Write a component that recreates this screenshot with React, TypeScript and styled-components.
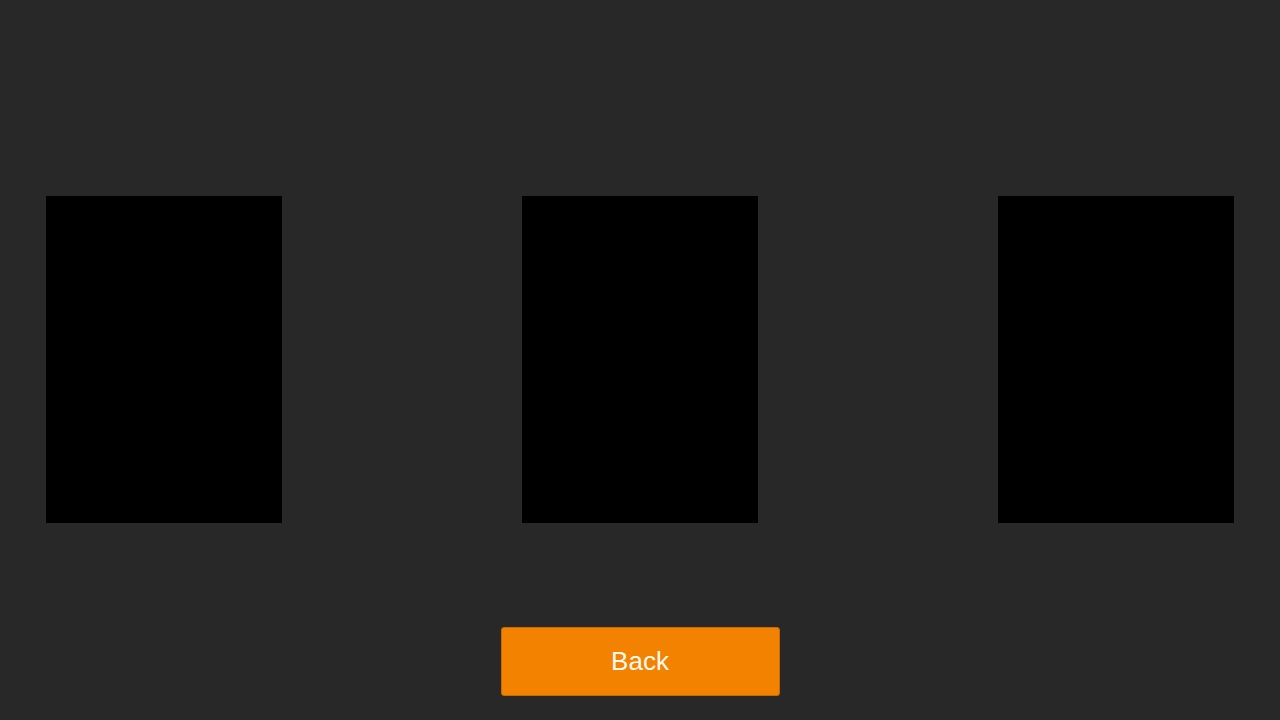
import styled, { createGlobalStyle } from "styled-components";

const GlobalStyle = createGlobalStyle`
  html, body {
    margin: 0;
    padding: 0;
    background: #282828;
  }
  body {
    font-family: "Liberation Sans", Arial, sans-serif;
  }
`;

const slots = ["left", "center", "right"];

export default function App() {
  return (
    <>
      <GlobalStyle />
      <Screen>
        <SlotRow>
          {slots.map((slot) => (
            <Slot key={slot} />
          ))}
        </SlotRow>
        <BackButton type="button">Back</BackButton>
      </Screen>
    </>
  );
}

const Screen = styled.div`
  width: 1280px;
  height: 720px;
  box-sizing: border-box;
  background: #282828;
  display: flex;
  flex-direction: column;
  align-items: center;
  padding-top: 196px;
`;

const SlotRow = styled.div`
  width: 100%;
  box-sizing: border-box;
  padding: 0 46px;
  display: flex;
  justify-content: space-between;
`;

const Slot = styled.div`
  width: 236px;
  height: 327px;
  background: #000;
`;

const BackButton = styled.button`
  margin-top: 104px;
  width: 279px;
  height: 69px;
  border: 1px solid #c86a00;
  border-radius: 3px;
  background: #f28200;
  color: #fffaf0;
  font-family: "Liberation Sans", Arial, sans-serif;
  font-size: 26px;
  cursor: pointer;
`;
